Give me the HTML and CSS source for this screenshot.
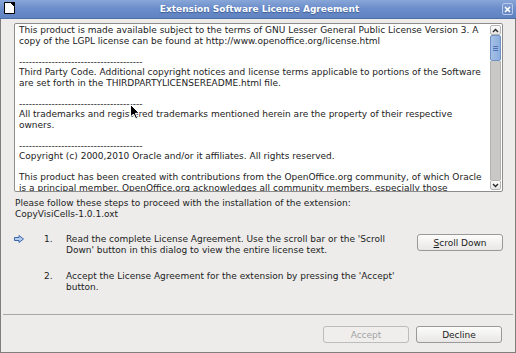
FILE: index.html
```html
<!DOCTYPE html>
<html lang="en">
<head>
    <meta charset="UTF-8">
    <title>Extension Software License Agreement</title>
    <link rel="stylesheet" href="styles.css">
</head>
<body>
    <div class="window">
        <div class="titlebar">
            <svg class="app-icon" width="12" height="12" viewBox="0 0 12 12">
                <path d="M1.5 0.5 H7.5 L11.5 4.5 V11.5 H1.5 Z" fill="#fff" stroke="#000"/>
                <path d="M7 0 L12 5 V0 Z" fill="#000"/>
            </svg>
            <div class="title">Extension Software License Agreement</div>
            <div class="close-btn">
                <svg width="7" height="7" viewBox="0 0 7 7">
                    <path d="M1 1 L6 6 M6 1 L1 6" stroke="#fff" stroke-width="1.6"/>
                </svg>
            </div>
        </div>
        <div class="frame">
            <div class="license">
                <div class="license-text">
                    This product is made available subject to the terms of GNU Lesser General Public License Version 3. A<br>
                    copy of the LGPL license can be found at http://www.openoffice.org/license.html<br>
                    <br>
                    --------------------------------------<br>
                    Third Party Code. Additional copyright notices and license terms applicable to portions of the Software<br>
                    are set forth in the THIRDPARTYLICENSEREADME.html file.<br>
                    <br>
                    --------------------------------------<br>
                    All trademarks and registered trademarks mentioned herein are the property of their respective<br>
                    owners.<br>
                    <br>
                    --------------------------------------<br>
                    Copyright (c) 2000,2010 Oracle and/or it affiliates. All rights reserved.<br>
                    <br>
                    This product has been created with contributions from the OpenOffice.org community, of which Oracle<br>
                    is a principal member. OpenOffice.org acknowledges all community members, especially those
                </div>
                <div class="scrollbar">
                    <div class="scroll-arrow">
                        <svg width="7" height="5" viewBox="0 0 7 5"><path d="M1 4 L3.5 1.5 L6 4" fill="none" stroke="#222" stroke-width="1.3"/></svg>
                    </div>
                    <div class="scroll-thumb"><span></span><span></span><span></span></div>
                    <div class="scroll-track"></div>
                    <div class="scroll-arrow">
                        <svg width="7" height="5" viewBox="0 0 7 5"><path d="M1 1 L3.5 3.5 L6 1" fill="none" stroke="#222" stroke-width="1.3"/></svg>
                    </div>
                </div>
                <svg class="pointer" width="10" height="16" viewBox="0 0 10 16">
                    <path d="M0.5 0.5 V13 L3.5 10 L5.8 15 L7.6 14.2 L5.4 9.3 H9.3 Z" fill="#000" stroke="#fff" stroke-width="1"/>
                </svg>
            </div>

            <p class="intro">Please follow these steps to proceed with the installation of the extension:<br>CopyVisiCells-1.0.1.oxt</p>

            <div class="step">
                <svg class="step-arrow" width="10" height="8" viewBox="0 0 10 8">
                    <path d="M0.5 2.5 H5 V0.5 L9.5 4 L5 7.5 V5.5 H0.5 Z" fill="#b4ccee" stroke="#3d67ad" stroke-width="1"/>
                </svg>
                <span class="step-num">1.</span>
                <span class="step-text">Read the complete License Agreement. Use the scroll bar or the 'Scroll<br>Down' button in this dialog to view the entire license text.</span>
                <button class="btn"><u>S</u>croll Down</button>
            </div>

            <div class="step">
                <span></span>
                <span class="step-num">2.</span>
                <span class="step-text">Accept the License Agreement for the extension by pressing the 'Accept'<br>button.</span>
                <span></span>
            </div>

            <div class="footer">
                <button class="btn" disabled>Accept</button>
                <button class="btn">Decline</button>
            </div>
        </div>
    </div>
</body>
</html>
```

FILE: styles.css
```css
body {
    margin: 0;
    font-family: "DejaVu Sans", sans-serif;
    font-size: 9px;
    line-height: 10.5px;
    color: #1c1c1c;
    background: #edeceb;
}
.window {
    width: 516px;
    height: 353px;
    display: flex;
    flex-direction: column;
    background-color: #edeceb;
}
.titlebar {
    height: 19px;
    display: flex;
    align-items: center;
    padding: 0 3px 0 3px;
    background: linear-gradient(#88a6d8, #6c8ecb 45%, #5f82c0);
    border-bottom: 1px solid #4f6fa8;
    box-sizing: border-box;
}
.app-icon {
    margin-top: -2px;
}
.title {
    flex: 1;
    text-align: center;
    color: #fff;
    font-weight: bold;
    font-size: 9px;
    text-shadow: 0 1px 1px #3a5a92;
    padding-left: 2px;
}
.close-btn {
    width: 11px;
    height: 12px;
    box-sizing: border-box;
    border: 1px solid #b9cbea;
    border-radius: 2px;
    display: flex;
    align-items: center;
    justify-content: center;
    background: linear-gradient(#7f9ed3, #6385c2);
}
.frame {
    flex: 1;
    display: flex;
    flex-direction: column;
    border: 1px solid #7e7e7e;
    border-top: none;
    padding: 4px 12px 0 13px;
}
.license {
    position: relative;
    height: 169px;
    box-sizing: border-box;
    border: 1px solid #8d8d8d;
    border-radius: 2px;
    background: #fff;
    display: flex;
    overflow: hidden;
}
.license-text {
    flex: 1;
    padding: 1px 0 0 4px;
    white-space: nowrap;
    overflow: hidden;
    color: #222;
}
.scrollbar {
    width: 11px;
    display: flex;
    flex-direction: column;
    padding: 1px 1px 1px 0;
}
.scroll-arrow {
    height: 10px;
    box-sizing: border-box;
    border: 1px solid #b5b5b5;
    border-radius: 2px;
    background: linear-gradient(#fdfdfd, #e6e5e3);
    display: flex;
    align-items: center;
    justify-content: center;
}
.scroll-thumb {
    height: 26px;
    box-sizing: border-box;
    border: 1px solid #6f91c7;
    border-radius: 2px;
    background: linear-gradient(90deg, #a6c0e6, #8caedd);
    display: flex;
    flex-direction: column;
    align-items: center;
    justify-content: center;
    gap: 1px;
}
.scroll-thumb span {
    width: 5px;
    height: 1px;
    background: #4f74b3;
}
.scroll-track {
    flex: 1;
    background: #c9c8c6;
    border-left: 1px solid #b4b3b1;
    border-right: 1px solid #b4b3b1;
}
.pointer {
    position: absolute;
    left: 115px;
    top: 80px;
}
.intro {
    margin: 6px 0 0 1px;
}
.step {
    display: grid;
    grid-template-columns: 29px 23px 1fr 86px;
    align-items: start;
    margin-top: 15px;
}
.step + .step {
    margin-top: 16px;
}
.step-arrow {
    margin-top: 1px;
}
.step-num {
    padding-left: 1px;
}
.btn {
    height: 17px;
    width: 86px;
    padding: 0;
    font-family: "DejaVu Sans", sans-serif;
    font-size: 9px;
    color: #1c1c1c;
    background: linear-gradient(#fcfcfb, #e8e7e5);
    border: 1px solid #999;
    border-radius: 3px;
}
.btn:disabled {
    color: #a3a3a3;
    border-color: #bcbcbc;
    background: #efeeed;
}
.footer {
    margin: auto -10px 0 -11px;
    border-top: 1px solid #a8a7a5;
    display: flex;
    justify-content: flex-end;
    gap: 7px;
    padding: 11px 11px 9px 0;
}
```
